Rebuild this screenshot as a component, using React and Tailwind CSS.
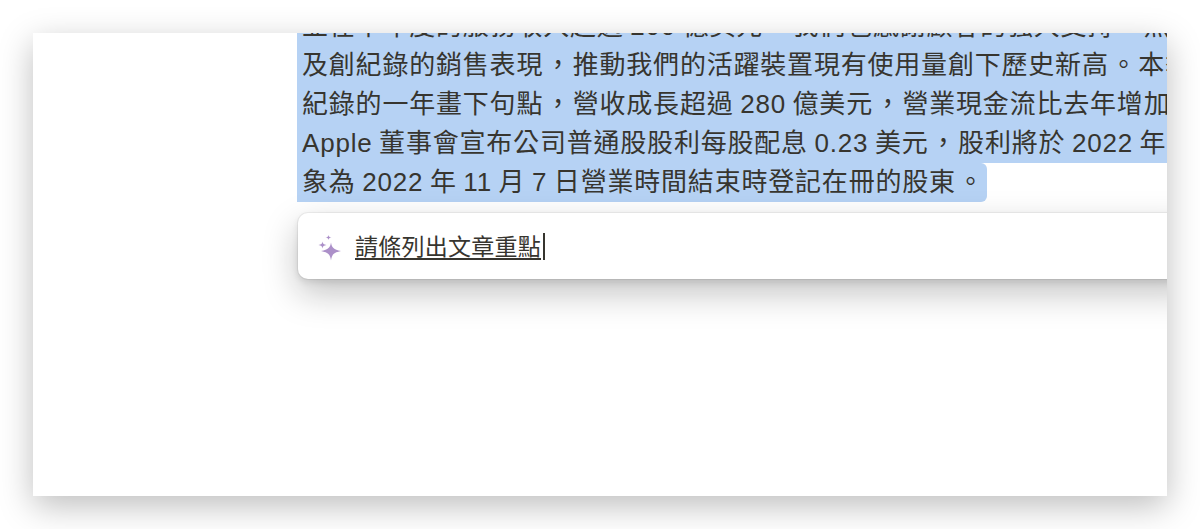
import React from 'react';

const lines = [
  '並在本年度的服務收入超過 200 億美元，我們也感謝顧客的強大支持，然及',
  '及創紀錄的銷售表現，推動我們的活躍裝置現有使用量創下歷史新高。本季',
  '紀錄的一年畫下句點，營收成長超過 280 億美元，營業現金流比去年增加',
  'Apple 董事會宣布公司普通股股利每股配息 0.23 美元，股利將於 2022 年',
];

// full-width punctuation sits wider than the rest of the run
const Line = ({ text }) =>
  text.split(/([，。])/).map((part, i) =>
    part === '，' || part === '。' ? (
      <span key={i} className="ml-[1.75px] tracking-[1.75px]">{part}</span>
    ) : (
      part
    )
  );

const Sparkle = () => (
  <svg width="26" height="30" viewBox="0 0 26 30" className="shrink-0" fill="#ac90c9">
    <path d="M14 9.5 C14.8 14.5 16.5 16.4 24 18 C16.5 19.6 14.8 21.5 14 27.5 C13.2 21.5 11.5 19.6 4 18 C11.5 16.4 13.2 14.5 14 9.5Z" />
    <path d="M5.5 8.5 C5.9 10.8 6.7 11.6 9.5 12 C6.7 12.4 5.9 13.2 5.5 15.5 C5.1 13.2 4.3 12.4 1.5 12 C4.3 11.6 5.1 10.8 5.5 8.5Z" />
    <path d="M11.5 2 C11.8 3.7 12.3 4.2 14.5 4.5 C12.3 4.8 11.8 5.3 11.5 7 C11.2 5.3 10.7 4.8 8.5 4.5 C10.7 4.2 11.2 3.7 11.5 2Z" />
  </svg>
);

export default function App() {
  return (
    <div lang="zh-TW" className="h-[529px] w-[1200px] overflow-hidden bg-white pt-[33px] px-[33px] font-['Liberation_Sans','Noto_Sans_CJK_TC',sans-serif]">
      <div className="h-[463px] overflow-hidden bg-white shadow-[0_10px_32px_rgba(0,0,0,0.26)]">
        {/* Selected paragraph */}
        <div className="-mt-[26px] ml-[264px] text-[26px] leading-[39px] tracking-[0.8px] [word-spacing:-1.4px] text-[#37352f]">
          {lines.map((line) => (
            <div key={line} className="h-[39px] whitespace-nowrap bg-[#b6d2f4] pl-[5px]">
              <Line text={line} />
            </div>
          ))}
          <div className="h-[39px] w-[690px] whitespace-nowrap rounded-r-md bg-[#b6d2f4] pl-[5px]">
            <Line text="象為 2022 年 11 月 7 日營業時間結束時登記在冊的股東。" />
          </div>
        </div>

        {/* AI prompt box */}
        <div className="ml-[265px] mt-[11px] flex h-[66px] w-[900px] items-center rounded-[10px] bg-white pl-[19px] pt-[4px] shadow-[0_0_0_1px_rgba(15,15,15,0.05),0_3px_6px_rgba(15,15,15,0.1),0_14px_34px_rgba(15,15,15,0.25)]">
          <Sparkle />
          <span className="ml-[12px] border-b-2 border-[#37352f] text-[23px] leading-[22px] tracking-[0.25px] text-[#37352f]">
            請條列出文章重點
          </span>
          <span className="-mt-[3px] ml-[2px] h-[27px] w-[2px] bg-[#37352f]" />
        </div>
      </div>
    </div>
  );
}
